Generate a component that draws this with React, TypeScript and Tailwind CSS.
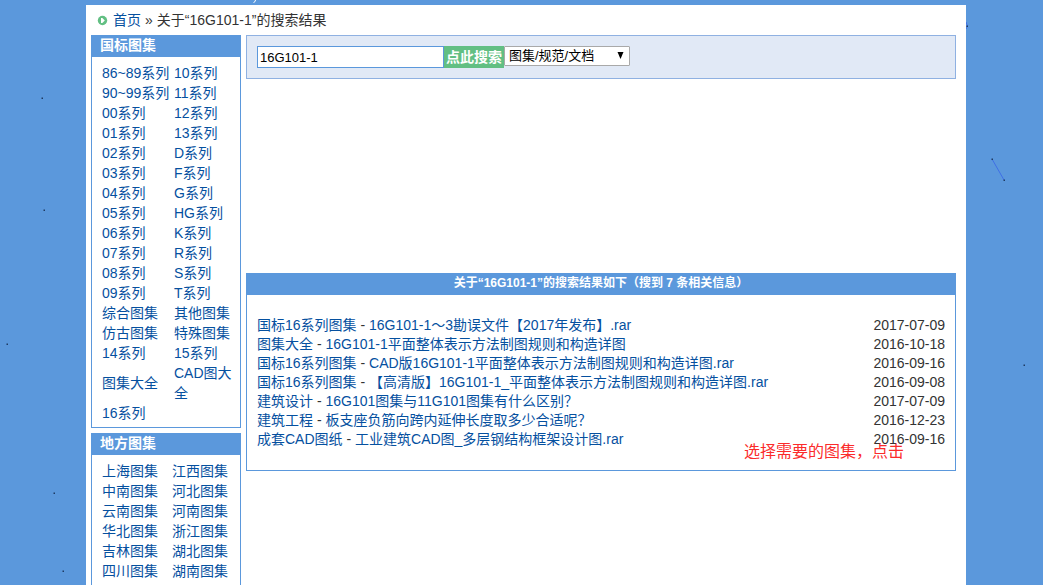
import React from "react";

const series: [string, string?][] = [
  ["86~89系列", "10系列"],
  ["90~99系列", "11系列"],
  ["00系列", "12系列"],
  ["01系列", "13系列"],
  ["02系列", "D系列"],
  ["03系列", "F系列"],
  ["04系列", "G系列"],
  ["05系列", "HG系列"],
  ["06系列", "K系列"],
  ["07系列", "R系列"],
  ["08系列", "S系列"],
  ["09系列", "T系列"],
  ["综合图集", "其他图集"],
  ["仿古图集", "特殊图集"],
  ["14系列", "15系列"],
  ["图集大全", "CAD图大全"],
  ["16系列"],
];

const regions: [string, string?][] = [
  ["上海图集", "江西图集"],
  ["中南图集", "河北图集"],
  ["云南图集", "河南图集"],
  ["华北图集", "浙江图集"],
  ["吉林图集", "湖北图集"],
  ["四川图集", "湖南图集"],
];

const results = [
  { category: "国标16系列图集", title: "16G101-1～3勘误文件【2017年发布】.rar", date: "2017-07-09" },
  { category: "图集大全", title: "16G101-1平面整体表示方法制图规则和构造详图", date: "2016-10-18" },
  { category: "国标16系列图集", title: "CAD版16G101-1平面整体表示方法制图规则和构造详图.rar", date: "2016-09-16" },
  { category: "国标16系列图集", title: "【高清版】16G101-1_平面整体表示方法制图规则和构造详图.rar", date: "2016-09-08" },
  { category: "建筑设计", title: "16G101图集与11G101图集有什么区别？", date: "2017-07-09" },
  { category: "建筑工程", title: "板支座负筋向跨内延伸长度取多少合适呢？", date: "2016-12-23" },
  { category: "成套CAD图纸", title: "工业建筑CAD图_多层钢结构框架设计图.rar", date: "2016-09-16" },
];

const dots = [
  [42, 98],
  [44, 210],
  [7, 344],
  [54, 493],
  [63, 571],
  [992, 159],
  [1004, 180],
  [1024, 365],
  [967, 26],
];

function LinkGrid({ rows, columns }: { rows: [string, string?][]; columns: string }) {
  return (
    <ul className="pt-1.5 pr-1 pb-1 pl-2.5">
      {rows.map(([left, right]) => (
        <li key={left} className={`grid items-center ${columns}`}>
          <a href="#" className="whitespace-nowrap text-[#05509f]">{left}</a>
          {right && <a href="#" className="text-[#05509f]">{right}</a>}
        </li>
      ))}
    </ul>
  );
}

function SideHeading({ children }: { children: React.ReactNode }) {
  return <h2 className="h-[22px] bg-[#5b98dc] pl-2 font-bold text-white">{children}</h2>;
}

export default function App() {
  return (
    <div className="relative min-h-screen overflow-hidden bg-[#5b98dc] pr-[77px] pl-[86px] font-['Liberation_Sans','Noto_Sans_CJK_SC',sans-serif] text-sm leading-5 text-[#333]">
      <svg className="pointer-events-none absolute top-0 left-0" width="1043" height="585" aria-hidden="true">
        <path d="M992 159 L1004 180" stroke="#3f6fe6" strokeWidth="1" />
        <path d="M966 22 L967.5 26 L966 29" stroke="#3f6fe6" fill="none" />
        <path d="M255.500 0 Q255.500 2 253.500 2.500" stroke="#fff" fill="none" />
        {dots.map(([x, y]) => (
          <rect key={`${x}-${y}`} x={x - 0.5} y={y - 0.5} width="1.500" height="1.500" fill="#1f3a63" />
        ))}
      </svg>

      <div className="pt-[5px]">
        <div className="relative flex min-h-[calc(100vh-5px)] flex-col bg-white px-[5px] pr-2.5">
          <nav className="flex h-[30px] items-center gap-1 pl-1.5">
            <svg width="12" height="11" viewBox="0 0 12 11" aria-hidden="true">
              <circle cx="5.500" cy="5.500" r="4.700" fill="#62bf83" />
              <path d="M4 2.900 H5.300 L7.800 5.500 L5.300 8.100 H4 Z" fill="#fff" />
            </svg>
            <a href="#" className="text-[#05509f]">首页</a>
            <span>»</span>
            <span>关于“16G101-1”的搜索结果</span>
          </nav>

          <div className="flex flex-1 gap-[5px]">
            <aside className="flex w-[150px] shrink-0 flex-col gap-[5px]">
              <section className="border border-t-0 border-[#5b98dc]">
                <SideHeading>国标图集</SideHeading>
                <LinkGrid rows={series} columns="grid-cols-[72px_1fr]" />
              </section>
              <section className="flex-1 border border-y-0 border-[#5b98dc]">
                <SideHeading>地方图集</SideHeading>
                <LinkGrid rows={regions} columns="grid-cols-[70px_1fr]" />
              </section>
            </aside>

            <main className="min-w-0 flex-1">
              <form
                className="flex h-11 items-start border border-[#8fb1e2] bg-[#e1e9f6] px-2.5 pt-2.5 text-[13px] text-black"
                onSubmit={(e) => e.preventDefault()}
              >
                <input
                  aria-label="搜索关键词"
                  defaultValue="16G101-1"
                  className="h-[22px] w-[187px] border border-[#5b98dc] bg-white px-0.5 outline-none"
                />
                <button type="submit" className="h-[22px] w-[60px] bg-[#62bf83] text-sm leading-5 font-bold whitespace-nowrap text-white">
                  点此搜索
                </button>
                <div className="relative">
                  <select
                    aria-label="搜索范围"
                    className="h-5 w-[126px] appearance-none rounded-[1px] border border-[#a9a9a9] bg-white pl-1 leading-4"
                  >
                    <option>图集/规范/文档</option>
                  </select>
                  <svg className="pointer-events-none absolute top-1.5 right-1.5" width="7" height="7" viewBox="0 0 7 7" aria-hidden="true">
                    <path d="M0.500 0 H6.500 L3.500 7 Z" fill="#000" />
                  </svg>
                </div>
              </form>

              <section className="relative mt-[194px] border border-t-0 border-[#5b98dc]">
                <h1 className="h-[22px] bg-[#5b98dc] text-center text-xs leading-5 font-bold text-white">
                  关于“16G101-1”的搜索结果如下（搜到 7 条相关信息）
                </h1>
                <ul className="px-2.5 pt-[21px] pb-[21px] leading-[19px]">
                  {results.map((r) => (
                    <li key={r.title} className="flex justify-between">
                      <span>
                        <a href="#" className="text-[#05509f]">{r.category}</a>
                        {" - "}
                        <a href="#" className="text-[#05509f]">{r.title}</a>
                      </span>
                      <time className="shrink-0">{r.date}</time>
                    </li>
                  ))}
                </ul>
                <p className="absolute right-[51px] bottom-2 text-base leading-5 text-[#fb2b2b]">选择需要的图集，点击</p>
              </section>
            </main>
          </div>
        </div>
      </div>
    </div>
  );
}
